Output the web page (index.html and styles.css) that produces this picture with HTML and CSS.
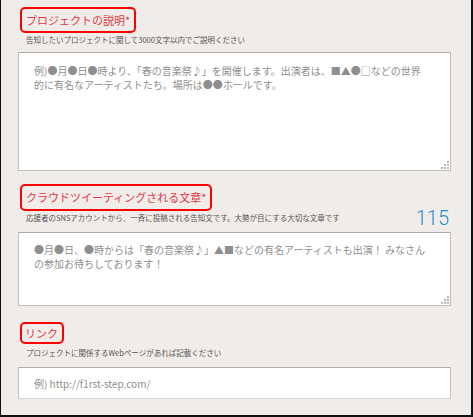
FILE: index.html
```html
<!DOCTYPE html>
<html lang="ja">
<head>
<meta charset="utf-8">
<title>プロジェクト</title>
<link rel="stylesheet" href="styles.css">
</head>
<body>
<div class="page">
  <section class="group g1">
    <h2 class="label"><span class="label-box">プロジェクトの説明*</span></h2>
    <p class="help">告知したいプロジェクトに関して3000文字以内でご説明ください</p>
    <div class="field">
      <textarea class="ta ta-lg" placeholder="例)●月●日●時より、「春の音楽祭♪」を開催します。出演者は、■▲●□などの世界&#10;的に有名なアーティストたち。場所は●●ホールです。"></textarea>
      <span class="grip"><svg width="8" height="8" viewBox="0 0 8 8"><rect x="6" y="0" width="2" height="2"/><rect x="3" y="3" width="2" height="2"/><rect x="6" y="3" width="2" height="2"/><rect x="0" y="6" width="2" height="2"/><rect x="3" y="6" width="2" height="2"/><rect x="6" y="6" width="2" height="2"/></svg></span>
    </div>
  </section>

  <section class="group g2">
    <h2 class="label"><span class="label-box">クラウドツイーティングされる文章*</span></h2>
    <div class="meta">
      <p class="help help-inline">応援者のSNSアカウントから、一斉に投稿される告知文です。大勢が目にする大切な文章です</p>
      <span class="counter">115</span>
    </div>
    <div class="field">
      <textarea class="ta ta-sm" placeholder="●月●日、●時からは「春の音楽祭♪」▲■などの有名アーティストも出演！ みなさん&#10;の参加お待ちしております！"></textarea>
      <span class="grip"><svg width="8" height="8" viewBox="0 0 8 8"><rect x="6" y="0" width="2" height="2"/><rect x="3" y="3" width="2" height="2"/><rect x="6" y="3" width="2" height="2"/><rect x="0" y="6" width="2" height="2"/><rect x="3" y="6" width="2" height="2"/><rect x="6" y="6" width="2" height="2"/></svg></span>
    </div>
  </section>

  <section class="group g3">
    <h2 class="label"><span class="label-box label-box-sm">リンク</span></h2>
    <p class="help help-link">プロジェクトに関係するWebページがあれば記載ください</p>
    <input class="url" type="text" placeholder="例) http://f1rst-step.com/">
  </section>
</div>
</body>
</html>
```

FILE: styles.css
```css
html, body {
  margin: 0;
  padding: 0;
}

body {
  background: #f0ece9;
  font-family: "Noto Sans CJK JP", "Noto Sans", sans-serif;
}

.page {
  box-sizing: border-box;
  width: 473px;
  height: 417px;
  padding: 7px 20px 0 17px;
  background: #f0ece9;
  border-left: 1px solid #111;
  border-right: 2px solid #111;
  border-bottom: 2px solid #111;
}

.group {
  margin: 0;
}

.g2 {
  margin-top: 13px;
}

.g3 {
  margin-top: 16px;
}

.label {
  margin: 0 0 0 2px;
  font-size: 11px;
  font-weight: normal;
  line-height: 0;
}

.label-box {
  display: inline-block;
  box-sizing: border-box;
  height: 26px;
  padding: 0 4px 0 4px;
  border: 2px solid #f00;
  border-radius: 5px;
  color: #e33845;
  line-height: 22px;
  letter-spacing: 0;
}

.g2 .label-box {
  height: 27px;
  line-height: 23px;
}

.label-box-sm {
  height: 22px;
  line-height: 18px;
  padding: 0 4px 0 3px;
}

.help {
  margin: 3px 0 0 8px;
  font-size: 7.5px;
  line-height: 8px;
  color: #555;
  white-space: nowrap;
}

.help-link {
  margin-top: 5px;
}

.meta {
  display: flex;
  align-items: center;
  justify-content: space-between;
  width: 433px;
  height: 14px;
}

.help-inline {
  margin: 0 0 0 8px;
}

.counter {
  padding-right: 2px;
  font-family: Roboto, "Open Sans", sans-serif;
  font-weight: 300;
  font-size: 20px;
  line-height: 14px;
  color: #2b8fc7;
}

.field {
  position: relative;
  width: 433px;
}

.g1 .field {
  margin-top: 8px;
}

.g2 .field {
  margin-top: 7px;
}

.ta {
  display: block;
  box-sizing: border-box;
  width: 433px;
  margin: 0;
  padding: 11px 6px 0 15px;
  border: 1px solid #c0c0c0;
  border-top-color: #acacac;
  border-radius: 0;
  background: #fff;
  font-family: "Noto Sans CJK JP", "Noto Sans", sans-serif;
  font-size: 10px;
  line-height: 13.5px;
  color: #8c8c8c;
  resize: none;
  outline: none;
  overflow: hidden;
}

.ta-lg {
  height: 119px;
}

.ta-sm {
  height: 74px;
  padding-top: 10px;
}

.ta::placeholder,
.url::placeholder {
  color: #8e8e8e;
  opacity: 1;
}

.grip {
  position: absolute;
  right: 2px;
  bottom: 2px;
  width: 8px;
  height: 8px;
  line-height: 0;
}

.grip svg {
  fill: #b8b8b8;
}

.url {
  display: block;
  box-sizing: border-box;
  width: 433px;
  height: 32px;
  margin: 10px 0 0 0;
  padding: 0 15px;
  border: 1px solid #c0c0c0;
  border-top-color: #b0b0b0;
  border-bottom-color: #d2d2d2;
  border-radius: 0;
  background: #fff;
  font-family: "Noto Sans CJK JP", "Noto Sans", sans-serif;
  font-size: 10px;
  color: #8c8c8c;
  outline: none;
}
```
